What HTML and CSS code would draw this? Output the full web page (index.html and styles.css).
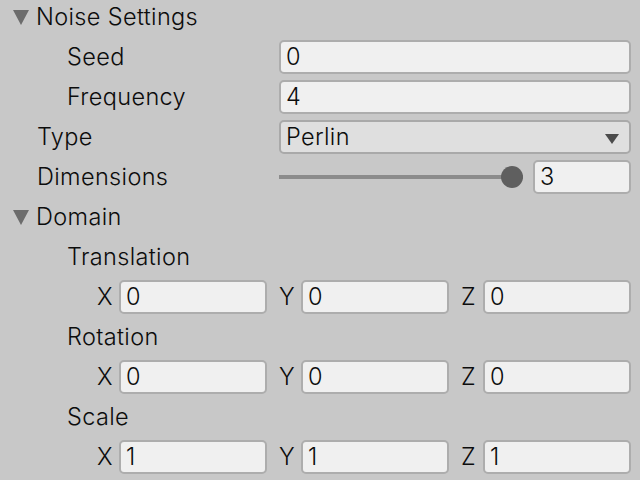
FILE: index.html
```html
<!DOCTYPE html>
<html>
<head>
<meta charset="utf-8">
<link rel="stylesheet" href="styles.css">
</head>
<body>
<div class="inspector">
  <div class="row">
    <div class="label lvl0 foldout"><span class="tri"></span>Noise Settings</div>
  </div>
  <div class="row">
    <div class="label lvl1">Seed</div>
    <div class="field">0</div>
  </div>
  <div class="row">
    <div class="label lvl1">Frequency</div>
    <div class="field">4</div>
  </div>
  <div class="row">
    <div class="label lvl0b">Type</div>
    <div class="field dropdown">Perlin<span class="arrow"></span></div>
  </div>
  <div class="row">
    <div class="label lvl0b">Dimensions</div>
    <div class="slider">
      <div class="track"><div class="knob"></div></div>
      <div class="field num">3</div>
    </div>
  </div>
  <div class="row">
    <div class="label lvl0 foldout"><span class="tri"></span>Domain</div>
  </div>
  <div class="row">
    <div class="label lvl1">Translation</div>
  </div>
  <div class="vrow">
    <div class="vgroup"><span class="vl">X</span><div class="field">0</div></div>
    <div class="vgroup"><span class="vl">Y</span><div class="field">0</div></div>
    <div class="vgroup"><span class="vl">Z</span><div class="field">0</div></div>
  </div>
  <div class="row">
    <div class="label lvl1">Rotation</div>
  </div>
  <div class="vrow">
    <div class="vgroup"><span class="vl">X</span><div class="field">0</div></div>
    <div class="vgroup"><span class="vl">Y</span><div class="field">0</div></div>
    <div class="vgroup"><span class="vl">Z</span><div class="field">0</div></div>
  </div>
  <div class="row">
    <div class="label lvl1">Scale</div>
  </div>
  <div class="vrow">
    <div class="vgroup"><span class="vl">X</span><div class="field">1</div></div>
    <div class="vgroup"><span class="vl">Y</span><div class="field">1</div></div>
    <div class="vgroup"><span class="vl">Z</span><div class="field">1</div></div>
  </div>
</div>
</body>
</html>
```
FILE: styles.css
```css
html, body {
  margin: 0;
  padding: 0;
  background: #c8c8c8;
}
body {
  font-family: Inter, "Noto Sans", sans-serif;
  font-size: 23.5px;
  font-weight: 350;
  letter-spacing: 0.35px;
  color: #0c0c0c;
}
.inspector {
  display: flex;
  flex-direction: column;
  gap: 6px;
  padding: 0 9px 0 0;
}
.row {
  display: grid;
  grid-template-columns: 279px 1fr;
  height: 34px;
  align-items: center;
}
.label {
  display: flex;
  align-items: center;
  white-space: nowrap;
  padding-bottom: 2px;
}
.lvl0 { padding-left: 13px; }
.lvl0b { padding-left: 37px; }
.lvl1 { padding-left: 67px; }
.tri {
  width: 0;
  height: 0;
  border-left: 8.5px solid transparent;
  border-right: 8.5px solid transparent;
  border-top: 15px solid #6c6c6c;
  margin-right: 7px;
  margin-top: 2px;
}
.field {
  height: 34px;
  box-sizing: border-box;
  background: #f0f0f0;
  border: 2px solid #adadad;
  border-radius: 5px;
  padding-left: 5px;
  padding-bottom: 1px;
  display: flex;
  align-items: center;
  position: relative;
}
.dropdown {
  background: #dfdfdf;
  border-color: #a9a9a9;
}
.arrow {
  position: absolute;
  right: 10px;
  top: 12px;
  width: 0;
  height: 0;
  border-left: 7.5px solid transparent;
  border-right: 7.5px solid transparent;
  border-top: 10px solid #4b4b4b;
}
.slider {
  display: flex;
  align-items: center;
  gap: 10px;
}
.track {
  flex: 1;
  height: 4px;
  background: #8c8c8c;
  position: relative;
}
.knob {
  position: absolute;
  right: 0;
  top: -9px;
  width: 22px;
  height: 22px;
  border-radius: 50%;
  background: #5f5f5f;
}
.num {
  width: 98px;
  flex: none;
}
.vrow {
  display: grid;
  grid-template-columns: repeat(3, 1fr);
  gap: 12px;
  padding-left: 97px;
  height: 34px;
}
.vgroup {
  display: grid;
  grid-template-columns: 22px 1fr;
  align-items: center;
  padding-bottom: 0;
}
.vl {
  padding-bottom: 2px;
}
```
